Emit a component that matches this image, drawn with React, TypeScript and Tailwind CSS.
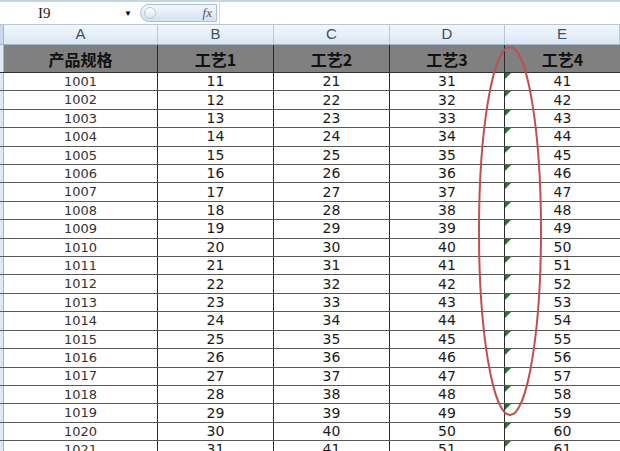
import React from "react";

const cols = [
  { letter: "A", width: "w-[154px]", title: "产品规格" },
  { letter: "B", width: "w-[116px]", title: "工艺1" },
  { letter: "C", width: "w-[116px]", title: "工艺2" },
  { letter: "D", width: "w-[115px]", title: "工艺3" },
  { letter: "E", width: "flex-1", title: "工艺4" },
];

const rows = Array.from({ length: 21 }, (_, i) => [
  1001 + i,
  11 + i,
  21 + i,
  31 + i,
  41 + i,
]);

const cjk = { fontFamily: '"Noto Sans CJK SC", sans-serif' };

const App = () => {
  return (
    <div className="relative w-[620px] h-[451px] overflow-hidden bg-white">
      {/* formula bar */}
      <div className="flex h-[25px] border-t-2 border-[#c5d5e8] border-b border-b-[#b8c6d8] bg-white">
        <div className="flex items-center w-[140px] pl-[38px] pr-2">
          <span className="text-[15px] text-[#222]" style={{ fontFamily: '"Liberation Serif", serif' }}>
            I9
          </span>
          <span className="ml-auto text-[8px] text-black">▼</span>
        </div>
        <div className="flex items-center w-[77px] my-[2px] rounded-l-full border border-[#a9bfd8] bg-gradient-to-b from-[#f3f7fc] to-[#d5e2f1] pr-1">
          <div className="ml-[3px] w-[12px] h-[12px] rounded-full border border-[#b9c9dc] bg-gradient-to-b from-white to-[#dbe5f1]" />
          <span
            className="ml-auto text-[13px] italic text-[#555]"
            style={{ fontFamily: '"Liberation Serif", serif' }}
          >
            fx
          </span>
        </div>
        <div className="flex-1 ml-[2px] border-l border-[#d5dde8]" />
      </div>

      {/* column headers */}
      <div className="flex h-[20px] border-b border-[#9eb6ce] bg-gradient-to-b from-[#f4f8fc] to-[#dbe6f3]">
        <div className="w-[4px] bg-[#c9daee] border-r border-[#9eb6ce]" />
        {cols.map((c) => (
          <div
            key={c.letter}
            className={`${c.width} flex items-center justify-center border-r border-[#b6c7da] text-[15px] text-[#3b4f68]`}
            style={{ fontFamily: '"Liberation Sans", sans-serif' }}
          >
            {c.letter}
          </div>
        ))}
      </div>

      {/* title row */}
      <div className="flex h-[28px] bg-[#808080] border-b border-[#333]">
        <div className="w-[4px] bg-[#dfe8f3] border-r border-[#9eb6ce]" />
        {cols.map((c, i) => (
          <div
            key={c.title}
            className={`${c.width} flex items-center justify-center font-bold text-[16px] text-[#111] ${
              i < 4 ? "border-r border-[#2a2a2a]" : ""
            }`}
            style={cjk}
          >
            {c.title}
          </div>
        ))}
      </div>

      {/* data rows */}
      {rows.map((r) => (
        <div key={r[0]} className="flex h-[18.42px] border-b border-[#5a5a5a]">
          <div className="w-[4px] bg-[#dfe8f3] border-r border-[#9eb6ce]" />
          {r.map((v, i) => (
            <div
              key={i}
              className={`${cols[i].width} relative flex items-center justify-center ${
                i < 4 ? "border-r border-[#2a2a2a]" : ""
              } ${i === 0 ? "text-[13px] text-[#333]" : "text-[14px] text-[#1a1a1a]"}`}
              style={{ fontFamily: '"DejaVu Sans", sans-serif' }}
            >
              {i === 4 && (
                <span className="absolute left-0 top-0 w-0 h-0 border-t-[6px] border-t-[#1e7a2a] border-r-[6px] border-r-transparent" />
              )}
              {v}
            </div>
          ))}
        </div>
      ))}

      {/* red annotation ellipse */}
      <svg className="absolute left-0 top-0 pointer-events-none" width="620" height="451">
        <ellipse cx="510" cy="231" rx="31" ry="184" fill="none" stroke="#c0504d" strokeWidth="2" />
      </svg>
    </div>
  );
};

export default App;
